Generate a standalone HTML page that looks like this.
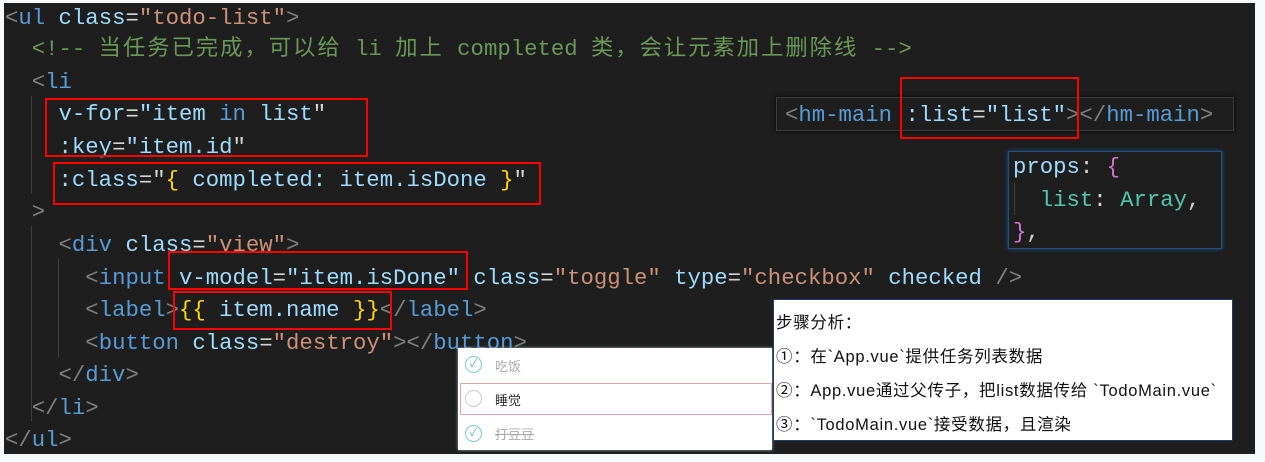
<!DOCTYPE html>
<html><head><meta charset="utf-8"><style>
body{margin:0;width:1265px;height:462px;background:#f7f8f9;position:relative;overflow:hidden;font-family:"Liberation Mono","Noto Sans CJK SC",monospace;}
.ed{position:absolute;left:4px;top:3px;width:1251px;height:451px;background:#1e1e1e;}
.l{position:absolute;left:5px;font-size:22.3px;line-height:32px;white-space:pre;color:#d4d4d4;}
.p{color:#808080}.t{color:#569cd6}.a{color:#9cdcfe}.s{color:#ce9178}.c{color:#6a9955}.y{color:#ffd700}.k{color:#569cd6}
.w{letter-spacing:2px}
.rb{position:absolute;border:2px solid #f00;}
.g{position:absolute;width:1px;background:#404040;}
.box{position:absolute;}
.cjk{font-family:"Liberation Sans","Noto Sans CJK SC",sans-serif;}
</style></head><body>
<div class="ed"></div>
<div class="g" style="left:31px;top:96px;height:98px"></div>
<div class="g" style="left:31px;top:226px;height:195px"></div>
<div class="g" style="left:58px;top:258px;height:100px"></div>
<div class="l" style="top:2px"><span class="p">&lt;</span><span class="t">ul</span> <span class="a">class</span>=<span class="s">"todo-list"</span><span class="p">&gt;</span></div>
<div class="l c" style="top:33px">  &lt;!-- <span class="w">当任务已完成，可以给</span> li <span class="w">加上</span> completed <span class="w">类，会让元素加上删除线</span> --&gt;</div>
<div class="l" style="top:66px">  <span class="p">&lt;</span><span class="t">li</span></div>
<div class="l" style="top:98px">    <span class="a">v-for</span>=<span class="a">"item </span><span class="k">in</span><span class="a"> list</span>"</div>
<div class="l" style="top:131px">    <span class="a">:key</span>=<span class="a">"item.id</span>"</div>
<div class="l" style="top:164px">    <span class="a">:class</span>="<span class="y">{</span><span class="a"> completed: item.isDone </span><span class="y">}</span>"</div>
<div class="l" style="top:196px">  <span class="p">&gt;</span></div>
<div class="l" style="top:229px">    <span class="p">&lt;</span><span class="t">div</span> <span class="a">class</span>=<span class="s">"view"</span><span class="p">&gt;</span></div>
<div class="l" style="top:262px">      <span class="p">&lt;</span><span class="t">input</span> <span class="a">v-model</span>=<span class="a">"item.isDone"</span> <span class="a">class</span>=<span class="s">"toggle"</span> <span class="a">type</span>=<span class="s">"checkbox"</span> <span class="a">checked</span> <span class="p">/&gt;</span></div>
<div class="l" style="top:294px">      <span class="p">&lt;</span><span class="t">label</span><span class="p">&gt;</span><span class="y">{{</span><span class="a"> item.name </span><span class="y">}}</span><span class="p">&lt;/</span><span class="t">label</span><span class="p">&gt;</span></div>
<div class="l" style="top:327px">      <span class="p">&lt;</span><span class="t">button</span> <span class="a">class</span>=<span class="s">"destroy"</span><span class="p">&gt;&lt;/</span><span class="t">button</span><span class="p">&gt;</span></div>
<div class="l" style="top:359px">    <span class="p">&lt;/</span><span class="t">div</span><span class="p">&gt;</span></div>
<div class="l" style="top:392px">  <span class="p">&lt;/</span><span class="t">li</span><span class="p">&gt;</span></div>
<div class="l" style="top:424px"><span class="p">&lt;/</span><span class="t">ul</span><span class="p">&gt;</span></div>

<div class="rb" style="left:45px;top:98px;width:319px;height:55px"></div>
<div class="rb" style="left:53px;top:162px;width:484px;height:39px"></div>
<div class="rb" style="left:168px;top:251px;width:296px;height:35px"></div>
<div class="rb" style="left:173px;top:291px;width:215px;height:35px"></div>

<div class="box" style="left:776px;top:97px;width:456px;height:32px;background:#1e1e1e;border:1px solid #3c3c3c;box-shadow:0 0 4px #000"></div>
<div class="l" style="left:785px;top:99px"><span class="p">&lt;</span><span class="t">hm-main</span> <span class="a">:list</span>=<span class="a">"list"</span><span class="p">&gt;&lt;/</span><span class="t">hm-main</span><span class="p">&gt;</span></div>
<div class="rb" style="left:900px;top:77px;width:175px;height:58px"></div>

<div class="box" style="left:1008px;top:151px;width:212px;height:96px;background:#1e1e1e;border:1px solid #2a4d7a;box-shadow:0 0 4px #1b5b9e"></div>
<div class="g" style="left:1014px;top:183px;height:32px"></div>
<div class="l" style="left:1013px;top:151px"><span class="a">props</span>: <span style="color:#da70d6">{</span></div>
<div class="l" style="left:1013px;top:184px">  <span style="color:#4ec9b0">list</span>: <span style="color:#4ec9b0">Array</span>,</div>
<div class="l" style="left:1013px;top:216px"><span style="color:#da70d6">}</span>,</div>

<div class="box cjk" style="left:458px;top:348px;width:314px;height:102px;background:#fff;font-size:13px;box-shadow:0 0 3px #9ab">
 <div style="position:absolute;left:7px;top:8px;width:15px;height:15px;border:1px solid #7cc;border-radius:50%;color:#5b9;font-size:11px;text-align:center;line-height:15px">✓</div>
 <div style="position:absolute;left:37px;top:8px;color:#aaa">吃饭</div>
 <div style="position:absolute;left:2px;top:35px;width:312px;height:32px;border:1px solid #e4a8a8;box-sizing:border-box"></div>
 <div style="position:absolute;left:7px;top:42px;width:15px;height:15px;border:1px solid #ccc;border-radius:50%"></div>
 <div style="position:absolute;left:37px;top:42px;color:#333">睡觉</div>
 <div style="position:absolute;left:7px;top:77px;width:15px;height:15px;border:1px solid #7cc;border-radius:50%;color:#5b9;font-size:11px;text-align:center;line-height:15px">✓</div>
 <div style="position:absolute;left:37px;top:76px;color:#aaa;text-decoration:line-through">打豆豆</div>
</div>

<div class="box cjk" style="left:773px;top:299px;width:458px;height:140px;background:#fff;border:1px solid #1f3d66;font-size:16.5px;letter-spacing:0.7px;color:#111">
 <div style="position:absolute;left:2px;top:9px">步骤分析：</div>
 <div style="position:absolute;left:2px;top:43px">①：在`App.vue`提供任务列表数据</div>
 <div style="position:absolute;left:2px;top:77px">②：App.vue通过父传子，把list数据传给 `TodoMain.vue`</div>
 <div style="position:absolute;left:2px;top:111px">③：`TodoMain.vue`接受数据，且渲染</div>
</div>
</body></html>
